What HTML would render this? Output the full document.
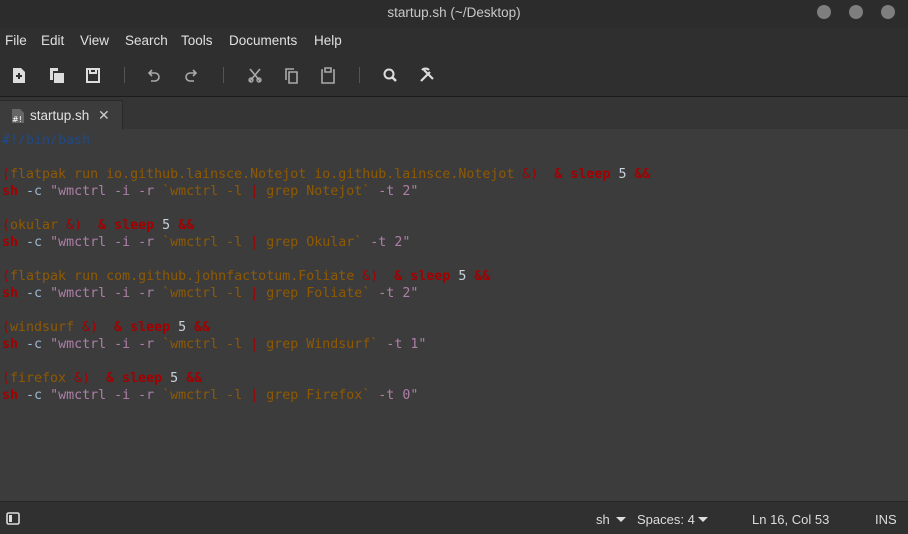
<!DOCTYPE html><html><head><style>
body{margin:0;width:908px;height:533px;background:#3c3c3c;font-family:"Liberation Sans","DejaVu Sans",sans-serif;overflow:hidden;position:relative;color:#dcdcdc}
.tb{position:absolute;left:0;top:0;width:908px;height:28px;background:#2c2c2c;text-align:center;font-size:13.5px;line-height:26px;color:#c8c8c8}
.dot{position:absolute;top:5px;width:14px;height:14px;border-radius:50%;background:#7e7e7e}
.menu{position:absolute;top:28px;left:0;width:908px;height:68px;background:#2f2f2f}
.menu span{position:absolute;top:5px;font-size:13.5px;color:#e0e0e0}
.sep{position:absolute;top:67px;width:1px;height:16px;background:#555}
.line96{position:absolute;top:96px;left:0;width:908px;height:1px;background:#1c1c1c}
.tabs{position:absolute;top:97px;left:0;width:908px;height:32px;background:#353535}
.tab{position:absolute;left:0;top:3px;width:122px;height:29px;background:#3c3c3c;border:1px solid #2a2a2a;border-bottom:none;border-left:none}
pre{position:absolute;left:2px;top:132px;margin:0;font-family:"DejaVu Sans Mono",monospace;font-size:13.3px;line-height:17px;color:#8f5902}
.r{color:#a40000}.b{color:#a40000;font-weight:bold}.p{color:#ad7fa8}.n{color:#c8d2dc}.c{color:#9db8d2}.h{color:#204a87}
.st{position:absolute;top:501px;left:0;width:908px;height:32px;background:#303030;border-top:1px solid #262626;font-size:13px;color:#dcdcdc}
.st span{position:absolute;top:10px}
svg{position:absolute}
</style></head><body>
<div class="tb">startup.sh (~/Desktop)</div>
<div class="dot" style="left:817px"></div><div class="dot" style="left:849px"></div><div class="dot" style="left:881px"></div>
<div class="menu">
<span style="left:5px">File</span><span style="left:41px">Edit</span><span style="left:80px">View</span><span style="left:125px">Search</span><span style="left:181px">Tools</span><span style="left:229px">Documents</span><span style="left:314px">Help</span>
</div>
<svg style="left:0;top:56px" width="460" height="40" fill="none" stroke="#ddd" stroke-width="2">
<path d="M13 12h8l4 4v11H13z" fill="#ddd" stroke="none"/><path d="M16 20h6M19 17v6" stroke="#2f2f2f"/>
<path d="M50 12h8v3h-5v9h-3z" fill="#ddd" stroke="none"/><path d="M54 17h10v10H54z" fill="#ddd" stroke="none"/>
<path d="M87 13h12v13H87z"/><path d="M90 13v4h6v-4"/>
<path d="M152 14l-3 3 3 3M149 17h6a4 4 0 0 1 0 8h-4" stroke-width="1.6" stroke="#aaa"/>
<path d="M193 14l3 3-3 3M196 17h-6a4 4 0 0 0 0 8h4" stroke-width="1.6" stroke="#aaa"/>
<path d="M250 13l10 12M260 13l-10 12" stroke-width="1.6" stroke="#aaa"/><circle cx="251" cy="24" r="2" stroke="#aaa" stroke-width="1.4"/><circle cx="259" cy="24" r="2" stroke="#aaa" stroke-width="1.4"/>
<path d="M286 24V13h8M289 16h8v11h-8z" stroke="#aaa" stroke-width="1.6"/>
<path d="M323 14h-1v13h12V14h-1M325 12h6v4h-6z" stroke="#aaa" stroke-width="1.6"/>
<circle cx="389" cy="18" r="4.5"/><path d="M392 21l4 4" stroke-width="2.5"/>
<path d="M421 25l9-9M424 14l9 9M422 14a5 5 0 0 1 7 0" stroke-width="2.2"/>
</svg>
<div class="sep" style="left:124px"></div><div class="sep" style="left:223px"></div><div class="sep" style="left:359px"></div>
<div class="line96"></div>
<div class="tabs"><div class="tab"></div>
<svg style="left:12px;top:12px" width="12" height="14"><path d="M0 0h8l4 4v10H0z" fill="#666"/><text x="0" y="13" font-size="8" fill="#fff" font-family="DejaVu Sans">#!</text></svg>
<span style="position:absolute;left:30px;top:11px;font-size:13.5px;color:#e0e0e0">startup.sh</span>
<span style="position:absolute;left:98px;top:10px;font-size:14px;color:#ccc;font-weight:bold">✕</span>
</div>
<pre><span class="h">#!/bin/bash</span>

<span class="r">(</span>flatpak run io.github.lainsce.Notejot io.github.lainsce.Notejot <span class="r">&amp;)</span>  <span class="b">&amp; sleep</span> <span class="n">5</span> <span class="b">&amp;&amp;</span>
<span class="b">sh</span> <span class="c">-c</span> <span class="p">"wmctrl -i -r </span>`wmctrl -l <span class="r">|</span> grep Notejot`<span class="p"> -t 2"</span>

<span class="r">(</span>okular <span class="r">&amp;)</span>  <span class="b">&amp; sleep</span> <span class="n">5</span> <span class="b">&amp;&amp;</span>
<span class="b">sh</span> <span class="c">-c</span> <span class="p">"wmctrl -i -r </span>`wmctrl -l <span class="r">|</span> grep Okular`<span class="p"> -t 2"</span>

<span class="r">(</span>flatpak run com.github.johnfactotum.Foliate <span class="r">&amp;)</span>  <span class="b">&amp; sleep</span> <span class="n">5</span> <span class="b">&amp;&amp;</span>
<span class="b">sh</span> <span class="c">-c</span> <span class="p">"wmctrl -i -r </span>`wmctrl -l <span class="r">|</span> grep Foliate`<span class="p"> -t 2"</span>

<span class="r">(</span>windsurf <span class="r">&amp;)</span>  <span class="b">&amp; sleep</span> <span class="n">5</span> <span class="b">&amp;&amp;</span>
<span class="b">sh</span> <span class="c">-c</span> <span class="p">"wmctrl -i -r </span>`wmctrl -l <span class="r">|</span> grep Windsurf`<span class="p"> -t 1"</span>

<span class="r">(</span>firefox <span class="r">&amp;)</span>  <span class="b">&amp; sleep</span> <span class="n">5</span> <span class="b">&amp;&amp;</span>
<span class="b">sh</span> <span class="c">-c</span> <span class="p">"wmctrl -i -r </span>`wmctrl -l <span class="r">|</span> grep Firefox`<span class="p"> -t 0"</span></pre>
<div class="st">
<svg style="left:6px;top:10px" width="14" height="13"><rect x="1" y="1" width="12" height="11" rx="1.5" fill="none" stroke="#ddd" stroke-width="1.6"/><rect x="3" y="3" width="3" height="7" fill="#ddd"/></svg>
<span style="left:596px">sh</span>
<svg style="left:616px;top:15px" width="10" height="6"><path d="M0 0h10L5 5z" fill="#ddd"/></svg>
<span style="left:637px">Spaces: 4</span>
<svg style="left:698px;top:15px" width="10" height="6"><path d="M0 0h10L5 5z" fill="#ddd"/></svg>
<span style="left:752px">Ln 16, Col 53</span>
<span style="left:875px">INS</span>
</div>
</body></html>
